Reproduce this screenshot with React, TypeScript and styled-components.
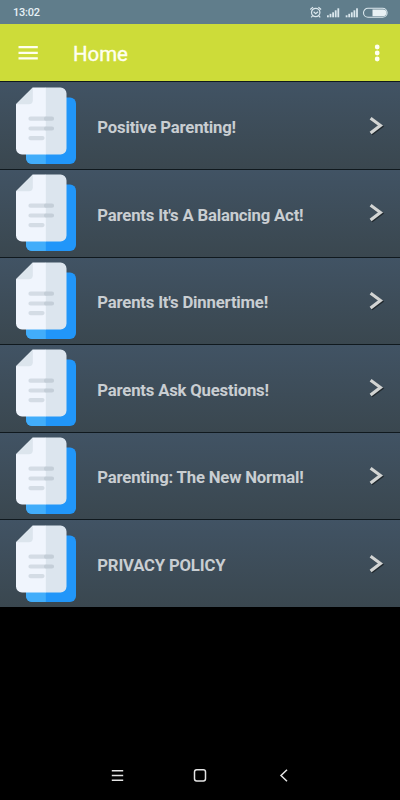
import React from "react";
import styled, { createGlobalStyle } from "styled-components";

const GlobalStyle = createGlobalStyle`
  * { box-sizing: border-box; }
  body { margin: 0; background: #000; font-family: Roboto, "Liberation Sans", sans-serif; }
`;

const Screen = styled.div`
  width: 400px;
  height: 800px;
  display: flex;
  flex-direction: column;
  background: #000;
  overflow: hidden;
`;

const StatusBar = styled.div`
  height: 24px;
  flex: none;
  display: flex;
  align-items: center;
  justify-content: space-between;
  padding: 1px 11px 0 13px;
  background: #607d8b;
`;

const Clock = styled.span`
  font-size: 11px;
  font-weight: 500;
  line-height: 14px;
  letter-spacing: -0.25px;
  color: #e6f1f6;
`;

const StatusIcons = styled.svg`
  display: block;
  width: 80px;
  height: 14px;
`;

const AppBar = styled.header`
  height: 57.4px;
  flex: none;
  display: flex;
  align-items: center;
  padding: 0 16px 0 18px;
  background: #cddc39;
`;

const BarIcon = styled.svg<{ $width: number }>`
  display: block;
  width: ${(p) => p.$width}px;
  height: 20px;
`;

const Title = styled.h1`
  flex: 1;
  margin: 2px 0 0 35px;
  font-size: 20.4px;
  font-weight: 400;
  line-height: 24px;
  color: #fffff0;
  -webkit-text-stroke: 0.4px #fffff0;
`;

const List = styled.main`
  flex: none;
`;

const Row = styled.div`
  height: 87.6px;
  display: flex;
  align-items: center;
  padding: 0 14px 0 15px;
  background: linear-gradient(#415364, #3a474f);
  border-top: 1.4px solid #10191e;
`;

const DocIcon = styled.svg`
  display: block;
  flex: none;
  width: 62px;
  height: 78px;
`;

const Label = styled.span`
  flex: 1;
  margin: 4.6px 0 0 20.3px;
  font-size: 16.7px;
  font-weight: 700;
  line-height: 22px;
  letter-spacing: -0.18px;
  white-space: nowrap;
  color: #c9ced2;
`;

const Chevron = styled.svg`
  display: block;
  flex: none;
  width: 18px;
  height: 22px;
`;

const NavBar = styled.nav`
  height: 49px;
  flex: none;
  margin-top: auto;
  display: flex;
  align-items: center;
  justify-content: space-between;
  padding: 0 109px 0 110px;
`;

const NavIcon = styled.svg`
  display: block;
  width: 15px;
  height: 15px;
  fill: none;
  stroke: #e4e4e4;
  stroke-width: 1.5;
`;

const items = [
  "Positive Parenting!",
  "Parents It's A Balancing Act!",
  "Parents It's Dinnertime!",
  "Parents Ask Questions!",
  "Parenting: The New Normal!",
  "PRIVACY POLICY",
];

const Signal = ({ x }: { x: number }) => (
  <g fill="#dbe8ee">
    {[2, 3.5, 5, 7, 9].map((h, i) => (
      <rect key={h} x={x + i * 2.6} y={11.3 - h} width="1.8" height={h} />
    ))}
  </g>
);

const DocumentPages = () => (
  <DocIcon viewBox="0 0 62 78">
    <rect x="11" y="10.5" width="50" height="66.5" rx="6" fill="#2196f9" />
    <path d="M11 66h19.8v11H17a6 6 0 0 1-6-6z" fill="#42adfa" />
    <path d="M17.8.5H31v67H7a6 6 0 0 1-6-6V17.2z" fill="#f0f5fd" />
    <path d="M30.8.5H45.5a6 6 0 0 1 6 6v55a6 6 0 0 1-6 6H30.8z" fill="#dce5ee" />
    <path d="M17.8.5V13.200a4 4 0 0 1-4 4H1z" fill="#dce5ed" />
    <g strokeWidth="4.200" strokeLinecap="round">
      <path d="M15.500 31.700H31M15.500 41.500H31M15.500 51.100H27.500" stroke="#d4dce5" />
      <path d="M31 31.700H37M31 41.500H37" stroke="#c4ced8" />
    </g>
  </DocIcon>
);

export default function App() {
  return (
    <>
      <GlobalStyle />
      <Screen>
        <StatusBar>
          <Clock>13:02</Clock>
          <StatusIcons viewBox="0 0 80 14">
            <g fill="none" stroke="#dbe8ee" strokeWidth="1.2">
              <circle cx="6.700" cy="6.500" r="4.200" />
              <path d="M1.300 3.500 4 1.100M9.400 1.100 12.100 3.500M4.600 5.800 6.700 7.600 9 5.800M3.500 9.800l-1.300 1.500M9.900 9.800l1.300 1.500" />
            </g>
            <Signal x={18} />
            <Signal x={36.7} />
            <rect x="54.500" y="2.300" width="23.600" height="9" rx="4.500" fill="none" stroke="#dbe8ee" strokeWidth="1.100" />
            <path d="M63.500 3.400h10.500a3.400 3.400 0 0 1 0 6.800H63.500z" fill="#e8f0f4" />
          </StatusIcons>
        </StatusBar>
        <AppBar>
          <BarIcon $width={20} viewBox="0 0 20 20">
            <path d="M.5 4.200h19.300M.5 9.800h19.300M.5 15.300h19.300" stroke="#fffff0" strokeWidth="2.200" />
          </BarIcon>
          <Title>Home</Title>
          <BarIcon $width={14} viewBox="0 0 14 20">
            <g fill="#fffff0">
              <circle cx="7.200" cy="4" r="2.400" />
              <circle cx="7.200" cy="10" r="2.400" />
              <circle cx="7.200" cy="16" r="2.400" />
            </g>
          </BarIcon>
        </AppBar>
        <List>
          {items.map((item) => (
            <Row key={item}>
              <DocumentPages />
              <Label>{item}</Label>
              <Chevron viewBox="0 0 18 22">
                <path d="M3.500 4.300 13.600 11.600 3.500 19.100" fill="none" stroke="#20282d" strokeWidth="3" />
                <path d="M2.600 3.200 12.400 10.500 2.600 18" fill="none" stroke="#d2d4d3" strokeWidth="3.200" />
              </Chevron>
            </Row>
          ))}
        </List>
        <NavBar>
          <NavIcon viewBox="0 0 15 15">
            <path d="M1.800 2.700h11.400M1.800 7.400h11.400M1.800 12.200h11.400" />
          </NavIcon>
          <NavIcon viewBox="0 0 15 15">
            <rect x="1.500" y="1.800" width="11" height="11.200" rx="2.200" />
          </NavIcon>
          <NavIcon viewBox="0 0 15 15">
            <path d="M11 1.800 5 7.500l6 5.800" />
          </NavIcon>
        </NavBar>
      </Screen>
    </>
  );
}
